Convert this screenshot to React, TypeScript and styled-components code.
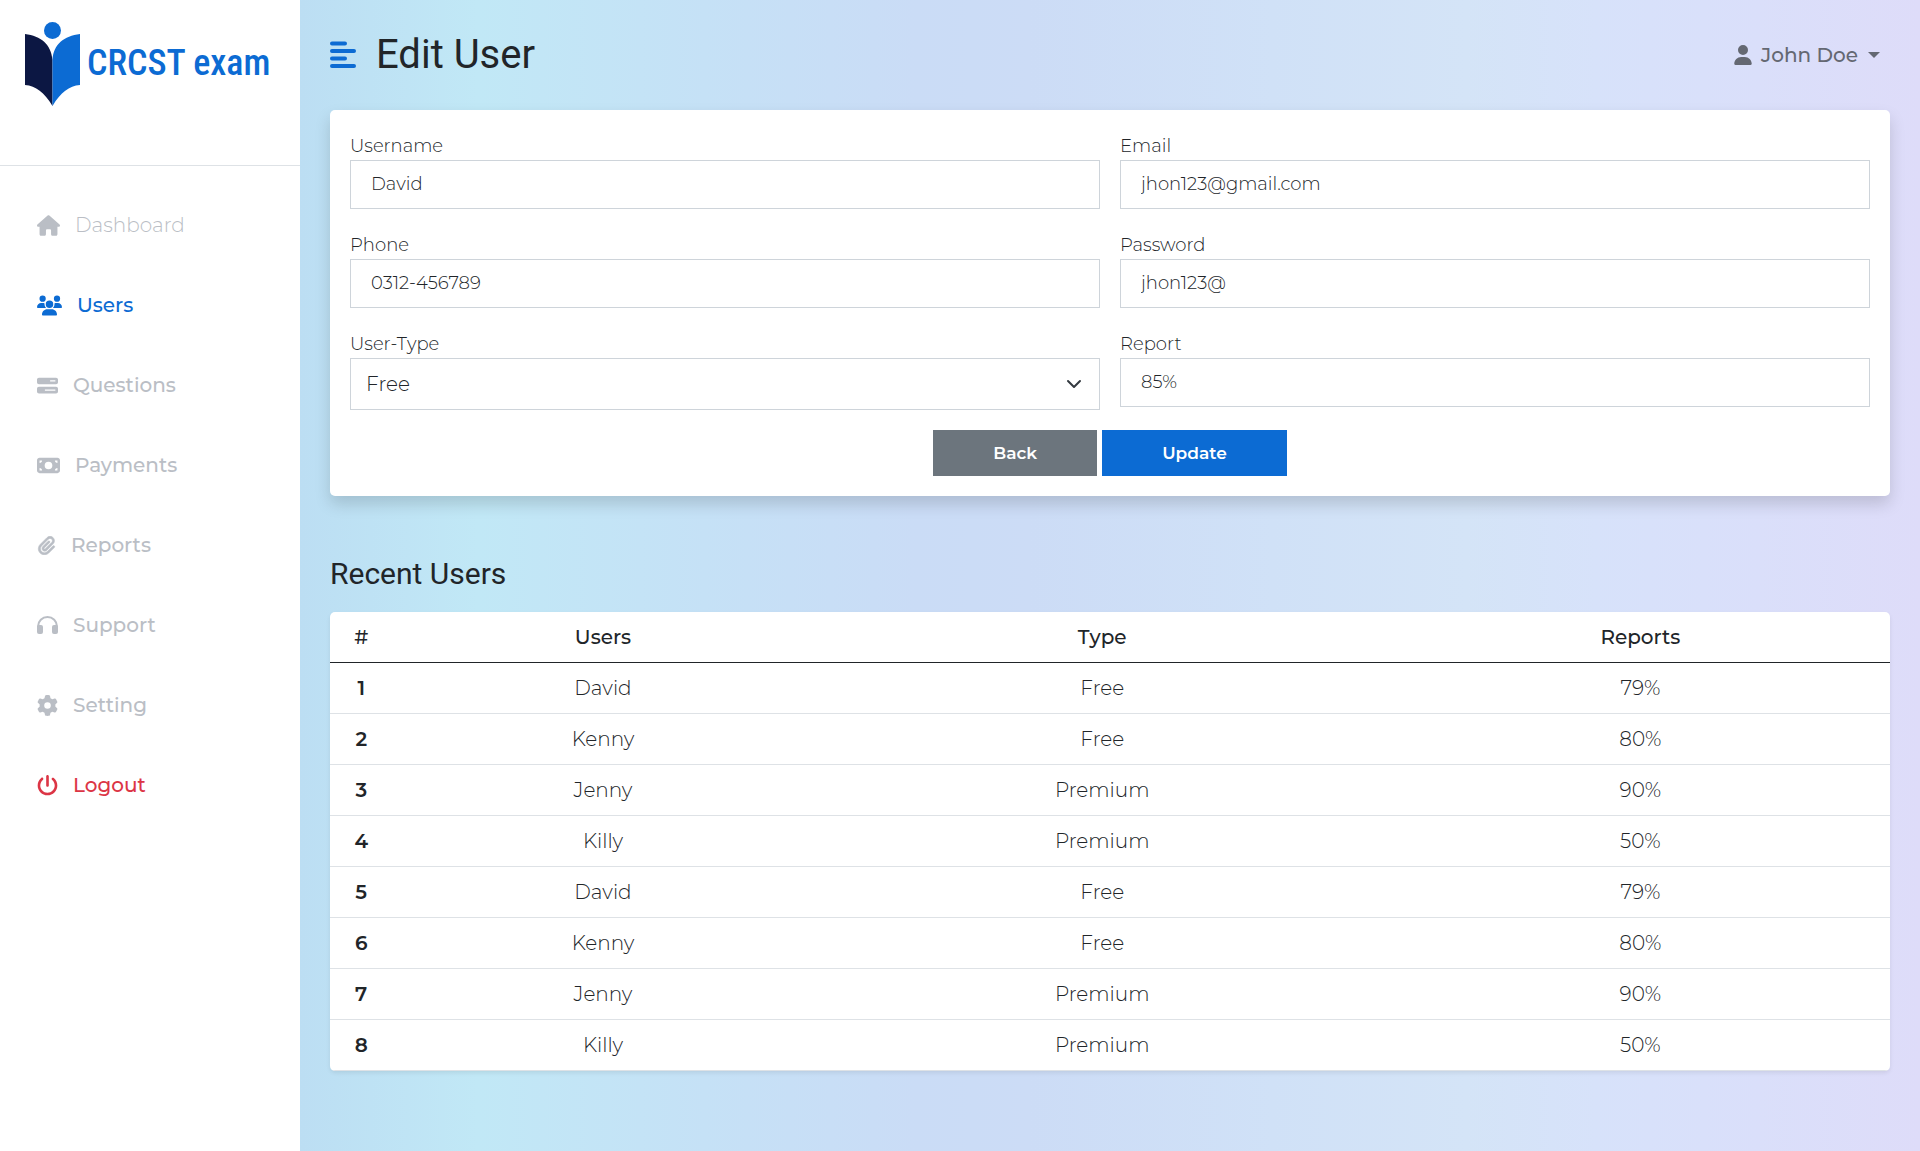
import React from 'react';
import styled, { createGlobalStyle } from 'styled-components';
import { FaHouse, FaUsers, FaBarsProgress, FaMoneyBill, FaPaperclip, FaGear, FaPowerOff, FaUser } from 'react-icons/fa6';

const bodyFont = "Montserrat, Inter, 'Liberation Sans', sans-serif";
const headFont = "Roboto, 'Liberation Sans', sans-serif";

const GlobalStyle = createGlobalStyle`
  *, *::before, *::after { box-sizing: border-box; }
  body { margin: 0; color: #212529; font-family: ${bodyFont}; font-size: 20px; line-height: 30px; }
  button, input, select { font-family: inherit; }
`;

const Page = styled.div`
  display: flex;
  min-height: 100vh;
  background: #fff;
`;

const Sidebar = styled.aside`
  width: 300px;
  flex-shrink: 0;
  background: #fff;
`;

const Brand = styled.a`
  display: flex;
  align-items: flex-start;
  height: 166px;
  padding: 20px 24px;
  border-bottom: 1px solid #dee2e6;
`;

const LogoText = styled.text`
  fill: #0c6bd3;
  font-family: 'Roboto Condensed', 'Liberation Sans Narrow', Roboto, sans-serif;
  font-size: 36px;
  font-weight: 500;
`;

const Nav = styled.nav`
  display: flex;
  flex-direction: column;
  padding: 19px 16px;
`;

const NavLink = styled.a<{ $color?: string; $weight?: number }>`
  display: flex;
  align-items: center;
  gap: 15px;
  height: 80px;
  padding: 0 21px;
  color: ${(p) => p.$color ?? '#babec5'};
  font-size: 20px;
  font-weight: ${(p) => p.$weight ?? 500};
  text-decoration: none;
`;

const Main = styled.main`
  flex: 1;
  min-width: 0;
  padding: 0 30px 80px;
  background: linear-gradient(to right, #bcdef3 0%, #c1e8f6 11%, #c5e1f6 25%, #cadcf6 38%, #ccdcf6 45%, #d0e1f7 60%, #d4e4f7 72%, #d7e2fa 80%, #dadffa 90%, #dedcf9 100%);
`;

const TopBar = styled.header`
  display: flex;
  align-items: center;
  justify-content: space-between;
  height: 110px;
`;

const TitleGroup = styled.div`
  display: flex;
  align-items: center;
  gap: 20px;
`;

const MenuButton = styled.button`
  display: flex;
  padding: 0;
  border: 0;
  background: none;
`;

const Title = styled.h1`
  margin: 0;
  font: 400 40px/48px ${headFont};
`;

const UserButton = styled.button`
  display: flex;
  align-items: center;
  gap: 8px;
  padding: 0 10px;
  border: 0;
  background: none;
  color: #646872;
  font-size: 20px;
  font-weight: 500;
  line-height: 30px;
`;

const Caret = styled.span`
  margin-left: 2px;
  border: 6px solid transparent;
  border-top-color: currentColor;
  border-bottom: 0;
`;

const Card = styled.form`
  display: grid;
  grid-template-columns: 1fr 1fr;
  gap: 20px;
  padding: 20px;
  border-radius: 5px;
  background: #fff;
  box-shadow: 0 8px 16px rgba(0, 0, 0, 0.15);
`;

const Field = styled.div`
  display: flex;
  flex-direction: column;
`;

const Label = styled.label`
  height: 30px;
  padding-top: 3px;
  font-size: 18px;
  line-height: 26px;
  font-weight: 300;
`;

const Input = styled.input`
  height: 49px;
  padding: 0 20px 2px;
  border: 1px solid #ced4da;
  background: #fff;
  color: #212529;
  font-size: 18px;
  font-weight: 300;
`;

const SelectWrap = styled.div`
  position: relative;
`;

const Select = styled.select`
  display: block;
  width: 100%;
  height: 52px;
  padding: 0 15px;
  border: 1px solid #ced4da;
  border-radius: 0;
  appearance: none;
  background: #fff;
  color: #212529;
  font-size: 20px;
  font-weight: 300;
`;

const Chevron = styled.svg`
  position: absolute;
  right: 18px;
  top: 18px;
  pointer-events: none;
`;

const Actions = styled.div`
  grid-column: 1 / -1;
  display: flex;
  justify-content: center;
  gap: 5px;
`;

const Action = styled.button<{ $bg: string }>`
  height: 46px;
  padding: 0 60px;
  border: 0;
  background: ${(p) => p.$bg};
  color: #fff;
  font-size: 17px;
  font-weight: 600;
`;

const SectionTitle = styled.h2`
  margin: 60px 0 20px;
  font: 400 30px/36px ${headFont};
`;

const Table = styled.table`
  width: 100%;
  table-layout: fixed;
  border-spacing: 0;
  border-radius: 5px;
  overflow: hidden;
  background: #fff;
  box-shadow: 0 2px 4px rgba(0, 0, 0, 0.08);
  text-align: center;
`;

const Col = styled.col<{ $share: number }>`
  width: ${(p) => p.$share}%;
`;

const Head = styled.th`
  height: 51px;
  padding: 0;
  border-bottom: 1px solid #212529;
  font-weight: 500;
`;

const RowHead = styled.th`
  height: 51px;
  padding: 0;
  border-bottom: 1px solid #dee2e6;
  font-weight: 600;
`;

const Cell = styled.td`
  height: 51px;
  padding: 0;
  border-bottom: 1px solid #dee2e6;
  font-size: 20px;
  font-weight: 300;
`;

const Logo = () => (
  <svg width="252" height="90" viewBox="0 0 252 90" role="img" aria-label="CRCST exam">
    <circle cx="28.500" cy="10.500" r="8.500" fill="#0c6bd3" />
    <path d="M1 14C17 16 27 24 28.500 40V86C20 72 12 66 1 65Z" fill="#0c1743" />
    <path d="M56 14C40 16 29.500 24 28.500 40V86C37 72 45 66 56 65Z" fill="#0c6bd3" />
    <LogoText x="63" y="55">CRCST exam</LogoText>
  </svg>
);

const HeadphonesIcon = () => (
  <svg width="21" height="18" viewBox="0 0 21 18" aria-hidden="true">
    <path d="M1 13V10.500a9.500 9.500 0 0 1 19 0V13" fill="none" stroke="currentColor" strokeWidth="2" />
    <rect x="0" y="9" width="6" height="9" rx="2" fill="currentColor" />
    <rect x="15" y="9" width="6" height="9" rx="2" fill="currentColor" />
  </svg>
);

const users = [
  ['David', 'Free', '79%'], ['Kenny', 'Free', '80%'], ['Jenny', 'Premium', '90%'], ['Killy', 'Premium', '50%'],
  ['David', 'Free', '79%'], ['Kenny', 'Free', '80%'], ['Jenny', 'Premium', '90%'], ['Killy', 'Premium', '50%'],
];

export default function App() {
  return (
    <Page>
      <GlobalStyle />
      <Sidebar>
        <Brand href="#"><Logo /></Brand>
        <Nav>
          <NavLink href="#" $weight={300}><FaHouse size={23} />Dashboard</NavLink>
          <NavLink href="#" $color="#0c6bd3"><FaUsers size={25} />Users</NavLink>
          <NavLink href="#"><FaBarsProgress size={21} />Questions</NavLink>
          <NavLink href="#"><FaMoneyBill size={23} />Payments</NavLink>
          <NavLink href="#"><FaPaperclip size={19} stroke="currentColor" strokeWidth={16} />Reports</NavLink>
          <NavLink href="#"><HeadphonesIcon />Support</NavLink>
          <NavLink href="#"><FaGear size={21} />Setting</NavLink>
          <NavLink href="#" $color="#dc3545"><FaPowerOff size={21} />Logout</NavLink>
        </Nav>
      </Sidebar>
      <Main>
        <TopBar>
          <TitleGroup>
            <MenuButton type="button" aria-label="Toggle menu">
              <svg width="26" height="28" viewBox="0 0 26 28" fill="none" stroke="#0c6bd3" strokeWidth="4" strokeLinecap="round">
                <path d="M2 2.500H15M2 10H24M2 17.500H15M2 25H24" />
              </svg>
            </MenuButton>
            <Title>Edit User</Title>
          </TitleGroup>
          <UserButton type="button"><FaUser size={20} />John Doe<Caret /></UserButton>
        </TopBar>
        <Card>
          <Field><Label htmlFor="username">Username</Label><Input id="username" defaultValue="David" /></Field>
          <Field><Label htmlFor="email">Email</Label><Input id="email" defaultValue="jhon123@gmail.com" /></Field>
          <Field><Label htmlFor="phone">Phone</Label><Input id="phone" defaultValue="0312-456789" /></Field>
          <Field><Label htmlFor="password">Password</Label><Input id="password" defaultValue="jhon123@" /></Field>
          <Field>
            <Label htmlFor="type">User-Type</Label>
            <SelectWrap>
              <Select id="type"><option>Free</option><option>Premium</option></Select>
              <Chevron width="16" height="16" viewBox="0 0 16 16" fill="none" stroke="#343a40" strokeWidth="2" strokeLinecap="round" strokeLinejoin="round"><path d="m2 5 6 6 6-6" /></Chevron>
            </SelectWrap>
          </Field>
          <Field><Label htmlFor="report">Report</Label><Input id="report" defaultValue="85%" /></Field>
          <Actions>
            <Action type="button" $bg="#6c757d">Back</Action>
            <Action type="button" $bg="#0c6bd3">Update</Action>
          </Actions>
        </Card>
        <SectionTitle>Recent Users</SectionTitle>
        <Table>
          <colgroup><Col $share={4} /><Col $share={27} /><Col $share={37} /><Col $share={32} /></colgroup>
          <thead><tr><Head>#</Head><Head>Users</Head><Head>Type</Head><Head>Reports</Head></tr></thead>
          <tbody>
            {users.map(([name, type, report], i) => (
              <tr key={i}><RowHead scope="row">{i + 1}</RowHead><Cell>{name}</Cell><Cell>{type}</Cell><Cell>{report}</Cell></tr>
            ))}
          </tbody>
        </Table>
      </Main>
    </Page>
  );
}
